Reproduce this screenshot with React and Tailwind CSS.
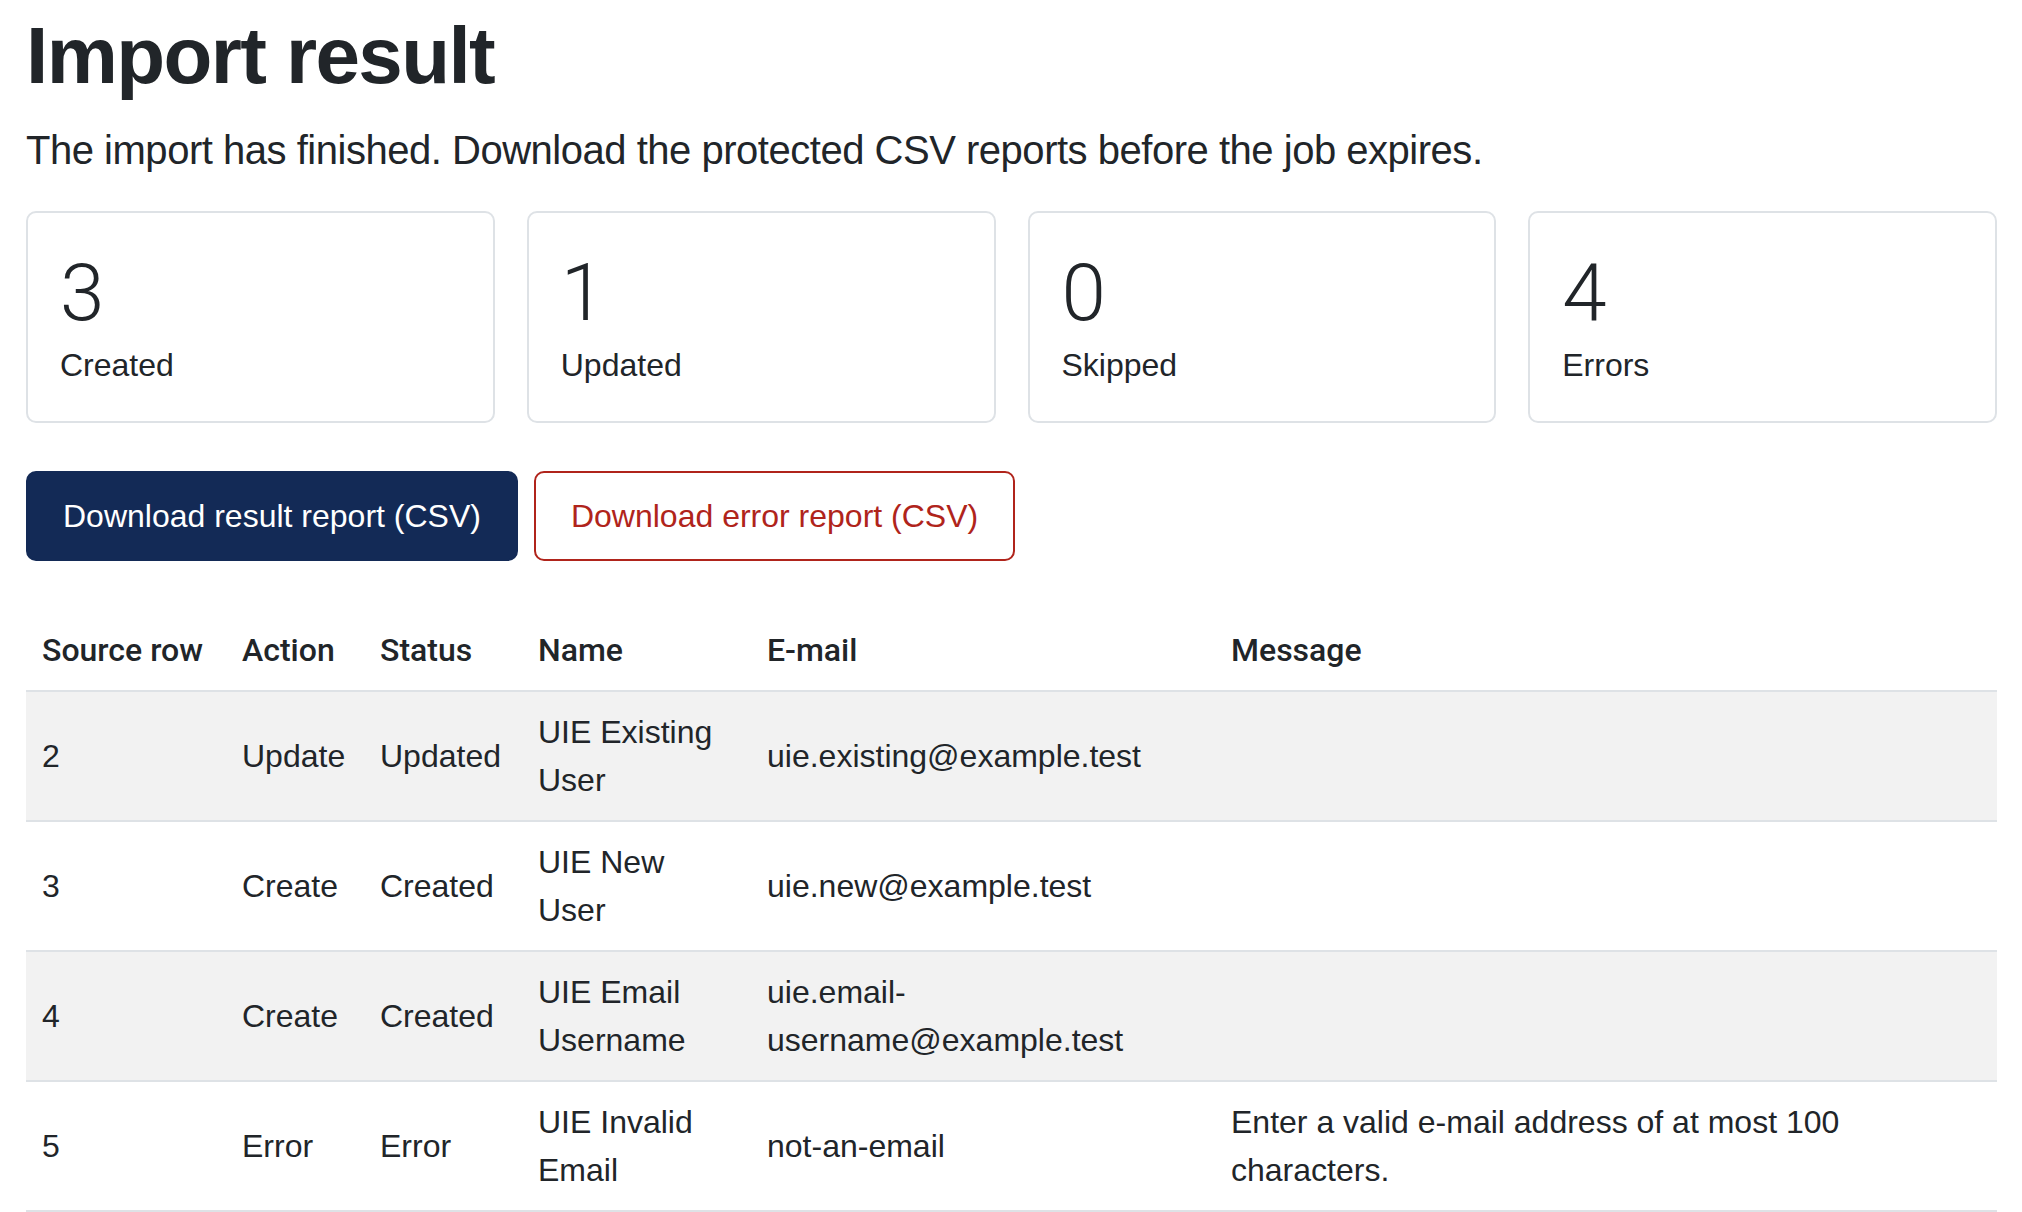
import React from 'react';

const stats = [
    { value: 3, label: 'Created' },
    { value: 1, label: 'Updated' },
    { value: 0, label: 'Skipped' },
    { value: 4, label: 'Errors' },
];

const rows = [
    { source: 2, action: 'Update', status: 'Updated', name: 'UIE Existing User', email: 'uie.existing@example.test', message: '' },
    { source: 3, action: 'Create', status: 'Created', name: 'UIE New User', email: 'uie.new@example.test', message: '' },
    { source: 4, action: 'Create', status: 'Created', name: 'UIE Email Username', email: 'uie.email-username@example.test', message: '' },
    { source: 5, action: 'Error', status: 'Error', name: 'UIE Invalid Email', email: 'not-an-email', message: 'Enter a valid e-mail address of at most 100 characters.' },
];

const StatCard = ({ value, label }) => (
    <div className="border-2 border-[#dee2e6] rounded-[10px] p-[32px] bg-white">
        <div className="font-['Roboto',sans-serif] font-light text-[80px] leading-[1.2]">{value}</div>
        <div className="text-[32px] leading-[1.5]">{label}</div>
    </div>
);

const App = () => {
    return (
        <div className="min-h-screen bg-white text-[#212529] font-['Liberation_Sans',Arial,sans-serif] pl-[26px] pr-[25px] pt-[8px]">
            <h1 className="text-[80px] leading-[1.2] font-bold tracking-[-0.02em] mb-[16px]">Import result</h1>
            <p className="text-[40px] leading-[1.5] tracking-[-0.012em] mb-[31px]">
                The import has finished. Download the protected CSV reports before the job expires.
            </p>

            <div className="grid grid-cols-4 gap-[32px] mb-[48px]">
                {stats.map((s) => (
                    <StatCard key={s.label} value={s.value} label={s.label} />
                ))}
            </div>

            <div className="flex gap-[16px] mb-[49px]">
                <button type="button" className="bg-[#132a56] border-2 border-[#132a56] text-white text-[32px] leading-[1.5] px-[35px] py-[19px] rounded-[10px]">
                    Download result report (CSV)
                </button>
                <button type="button" className="bg-white border-2 border-[#b0241b] text-[#b0241b] text-[32px] leading-[1.5] px-[35px] py-[19px] rounded-[10px]">
                    Download error report (CSV)
                </button>
            </div>

            <table className="w-full table-fixed border-collapse text-[32px] leading-[1.5]">
                <colgroup>
                    <col className="w-[200px]" />
                    <col className="w-[138px]" />
                    <col className="w-[158px]" />
                    <col className="w-[229px]" />
                    <col className="w-[464px]" />
                    <col />
                </colgroup>
                <thead>
                    <tr className="border-b-2 border-[#dee2e6]">
                        {['Source row', 'Action', 'Status', 'Name', 'E-mail', 'Message'].map((h) => (
                            <th key={h} className="text-left font-['Roboto',sans-serif] font-medium whitespace-nowrap p-[16px] align-middle">{h}</th>
                        ))}
                    </tr>
                </thead>
                <tbody>
                    {rows.map((r, i) => (
                        <tr key={r.source} className={`border-b-2 border-[#dee2e6] ${i % 2 === 0 ? 'bg-[#f2f2f2]' : 'bg-white'}`}>
                            <td className="p-[16px] align-middle">{r.source}</td>
                            <td className="p-[16px] align-middle">{r.action}</td>
                            <td className="p-[16px] align-middle">{r.status}</td>
                            <td className="p-[16px] align-middle">{r.name}</td>
                            <td className="p-[16px] align-middle">{r.email}</td>
                            <td className="p-[16px] align-middle">{r.message}</td>
                        </tr>
                    ))}
                </tbody>
            </table>
        </div>
    );
};

export default App;
